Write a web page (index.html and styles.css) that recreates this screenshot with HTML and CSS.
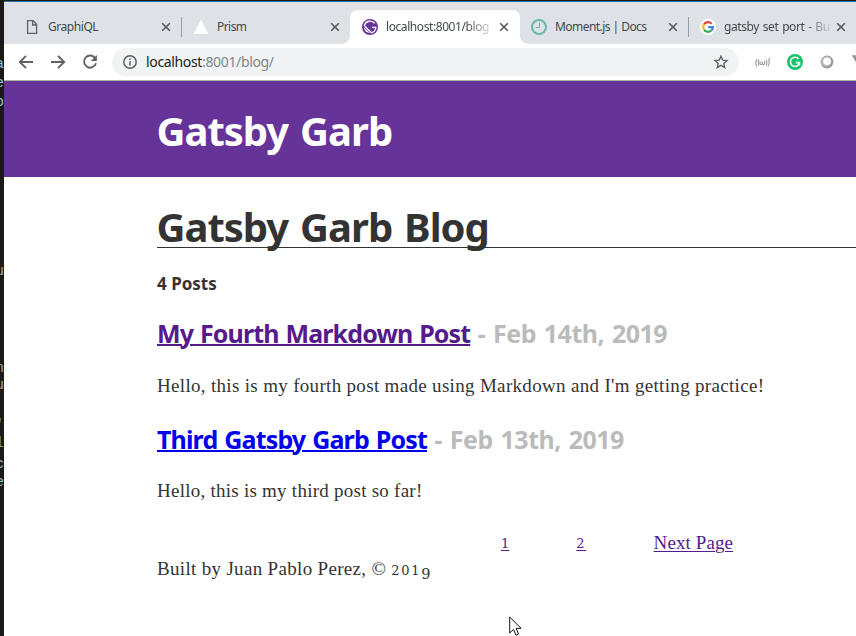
FILE: index.html
```html
<!DOCTYPE html>
<html lang="en">
<head>
<meta charset="utf-8">
<title>Gatsby Garb Blog</title>
<link rel="stylesheet" href="styles.css">
</head>
<body>
<div class="desktop">
  <aside class="editor" aria-hidden="true">
    <span class="bit" style="top:56px">a</span>
    <span class="bit" style="top:75px">e</span>
    <span class="bit" style="top:94px">o</span>
    <span class="bit tan" style="top:263px">u</span>
    <span class="bit tan" style="top:360px">n</span>
    <span class="bit tan" style="top:377px">u</span>
    <span class="bit" style="top:417px">'</span>
    <span class="bit green" style="top:435px">l</span>
    <span class="bit" style="top:456px">c</span>
    <span class="bit" style="top:474px">e</span>
  </aside>
  <div class="window">
    <nav class="tabs">
      <div class="tab divided">
        <svg class="fav" viewBox="0 0 16 16"><path d="M4.6 1.7h5.6l3.4 3.6v9H4.6z M9.7 2v4h3.8" transform="translate(-1 0)" fill="none" stroke="#5f6368" stroke-width="1.3"/></svg>
        <span class="label"><span class="t1">GraphiQL</span></span>
        <svg class="close" viewBox="0 0 10 10"><path d="M1.2 1.2l7.6 7.6M8.8 1.2L1.2 8.8"/></svg>
      </div>
      <div class="tab">
        <svg class="fav" viewBox="0 0 16 16"><path d="M8 .7L15.4 15H.6z" fill="#fff"/></svg>
        <span class="label"><span class="t2">Prism</span></span>
        <svg class="close" viewBox="0 0 10 10"><path d="M1.2 1.2l7.6 7.6M8.8 1.2L1.2 8.8"/></svg>
      </div>
      <div class="tab active">
        <svg class="fav" viewBox="0 0 16 16"><circle cx="8" cy="8" r="8" fill="#639"/><path d="M2 8.2L7.8 14A6 6 0 0 1 2 8.2z" fill="#fff"/><path d="M2.3 6.6L9.4 13.8A6 6 0 0 0 13.8 8.3H9.9M12.8 4.4A6 6 0 0 0 2.3 6.6" fill="none" stroke="#fff" stroke-width="1.3"/></svg>
        <span class="label fade"><span class="t3">localhost:8001/blog</span></span>
        <svg class="close" viewBox="0 0 10 10"><path d="M1.2 1.2l7.6 7.6M8.8 1.2L1.2 8.8"/></svg>
      </div>
      <div class="tab divided">
        <svg class="fav" viewBox="0 0 16 16"><circle cx="8" cy="8" r="7" fill="none" stroke="#66b8aa" stroke-width="2"/><path d="M8.5 3.5v5H5" fill="none" stroke="#66b8aa" stroke-width="1"/></svg>
        <span class="label"><span class="t4">Moment.js | Docs</span></span>
        <svg class="close" viewBox="0 0 10 10"><path d="M1.2 1.2l7.6 7.6M8.8 1.2L1.2 8.8"/></svg>
      </div>
      <div class="tab">
        <svg class="fav" viewBox="0 0 16 16"><circle cx="8" cy="8" r="8" fill="#fff"/><g fill="none" stroke-width="2.2"><path d="M4 5.4A4.8 4.8 0 0 1 11.6 4.7" stroke="#ea4335"/><path d="M4 5.4A4.8 4.8 0 0 0 4 10.6" stroke="#fbbc05"/><path d="M4 10.6A4.8 4.8 0 0 0 11.3 11.5" stroke="#34a853"/><path d="M11.3 11.5A4.8 4.8 0 0 0 12.9 8.1H8.2" stroke="#4285f4"/></g></svg>
        <span class="label fade"><span class="t5">gatsby set port - Bu</span></span>
        <svg class="close last" viewBox="0 0 10 10"><path d="M1.2 1.2l7.6 7.6M8.8 1.2L1.2 8.8"/></svg>
      </div>
    </nav>
    <div class="toolbar">
      <svg class="nav" viewBox="0 0 16 16"><path d="M15 8H2.2M8 1.8L1.8 8 8 14.2"/></svg>
      <svg class="nav" viewBox="0 0 16 16"><path d="M1 8h12.8M8 1.8L14.2 8 8 14.2"/></svg>
      <svg class="nav" viewBox="0 0 16 16"><path d="M13.3 4.3A6.1 6.1 0 1 0 14 9.3"/><path d="M14.9 1v6.1H8.8z" fill="#5f6368" stroke="none"/></svg>
      <div class="omnibox">
        <svg class="info" viewBox="0 0 14 14"><circle cx="7" cy="7" r="6.2" fill="none" stroke="#5f6368" stroke-width="1.5"/><path d="M7 6.2v4.2M7 3.4v1.6" stroke="#5f6368" stroke-width="1.6"/></svg>
        <span class="url"><b>localhost</b>:8001/blog/</span>
        <svg class="star" viewBox="0 0 14 14"><path d="M7 1.2l1.7 3.9 4.3.4-3.2 2.9.9 4.2L7 10.4l-3.7 2.2.9-4.2L1 5.5l4.3-.4z" fill="none" stroke="#5f6368" stroke-width="1.4"/></svg>
      </div>
      <svg class="ext" viewBox="0 0 16 16"><path d="M2 5Q-.6 9 2 12.6M4 5.5q-1.4 3 0 6M5 7.5v2.3q1 1.7 2.2 0V7.5M7.2 9.8q1.3 1.7 2.4 0V7M11 5.5q1.8 3 0 6M15.5 4.5q-2.2 0-1.5 2.4t-1.2 5.7" fill="none" stroke="#999" stroke-width="1.1"/></svg>
      <svg class="ext" viewBox="0 0 16 16"><circle cx="8" cy="8" r="8" fill="#15c26b"/><path d="M11.6 4.9A4.6 4.6 0 1 0 12.2 9.8M8.7 8.6h3.8v3" fill="none" stroke="#fff" stroke-width="1.6"/></svg>
      <svg class="ext" viewBox="0 0 16 16"><circle cx="8" cy="8" r="6.4" fill="#999"/><circle cx="7.4" cy="7.4" r="5.2" fill="#bbb"/><circle cx="8" cy="7.2" r="3.8" fill="#fff"/></svg>
      <svg class="ext" viewBox="0 0 16 16"><path d="M.7 1.3h15L8 13z" fill="#999"/></svg>
    </div>
    <header class="banner"><h1>Gatsby Garb</h1></header>
    <main class="page">
      <h1 class="blog">Gatsby Garb Blog</h1>
      <h4>4 Posts</h4>
      <article>
        <h3><a class="visited" href="#">My Fourth Markdown Post</a> <span class="date">- Feb 14th, 2019</span></h3>
        <p>Hello, this is my fourth post made using Markdown and I'm getting practice!</p>
      </article>
      <article>
        <h3><a class="fresh" href="#">Third Gatsby Garb Post</a> <span class="date">- Feb 13th, 2019</span></h3>
        <p class="short">Hello, this is my third post so far!</p>
      </article>
      <nav class="pager"><a class="num" href="#">1</a><a class="num two" href="#">2</a><a class="next" href="#">Next Page</a></nav>
      <footer>Built by Juan Pablo Perez, © <span class="num year">201<span class="nine">9</span></span></footer>
    </main>
  </div>
  <svg class="cursor" viewBox="0 0 13 20"><path d="M.7 1v16l3.8-3.6 2.5 5.8 2.6-1.1-2.5-5.7h5z" fill="#fff" stroke="#111" stroke-width="1"/></svg>
</div>
</body>
</html>
```
FILE: styles.css
```css
* { box-sizing: border-box; }
body { margin: 0; background: #fff; overflow: hidden; }
svg { display: block; flex: none; }
h1, h3, h4, p { margin: 0; }
.desktop { position: relative; display: flex; width: 856px; height: 636px; overflow: hidden; background: #1b1a17; }
.editor { position: relative; width: 4px; flex: none; overflow: hidden; font: 14px/17px "Liberation Mono", monospace; color: #8fc3d8; }
.bit { position: absolute; right: 0; }
.tan { color: #b9a88c; }
.green { color: #89a77c; }
.window { flex: 1; min-width: 0; margin-top: 1px; border-top: 1px solid #2673ad; background: #fff; overflow: hidden; }

.tabs { display: flex; height: 42px; padding: 8px 0 0 8px; background: #dee1e6; font: 12px/16px "Noto Sans", "Open Sans", sans-serif; color: #45494d; }
.tab { position: relative; display: flex; align-items: center; flex: none; width: 169px; padding: 0 10px 0 12px; }
.fav { width: 16px; height: 16px; margin-right: 8px; }
.label { width: 106px; overflow: hidden; white-space: nowrap; }
.fade { -webkit-mask-image: linear-gradient(90deg, #000 80px, transparent 110px); mask-image: linear-gradient(90deg, #000 80px, transparent 110px); }
.t1 { letter-spacing: -.45px; }
.t2 { letter-spacing: -.55px; }
.t3 { letter-spacing: -.42px; }
.t4 { letter-spacing: -.55px; }
.t5 { letter-spacing: -.4px; word-spacing: 1px; }
.close { width: 10px; height: 10px; margin-left: 7px; fill: none; stroke: #55595d; stroke-width: 1.6; }
.last { margin-left: 6px; }
.divided::after { content: ""; position: absolute; right: -1px; top: 7px; width: 1px; height: 20px; background: #9a9da2; }
.active { border-radius: 8px 8px 0 0; background: #fff; width: 170px; margin: 0 -1px 0 0; }
.active::before, .active::after { content: ""; position: absolute; bottom: 0; width: 8px; height: 8px; }
.active::before { left: -8px; background: radial-gradient(circle at 0 0, transparent 7.5px, #fff 8px); }
.active::after { right: -8px; background: radial-gradient(circle at 8px 0, transparent 7.5px, #fff 8px); }

.toolbar { display: flex; align-items: center; height: 37px; padding-left: 14px; border-bottom: 1px solid #aeb3a4; background: #fff; }
.nav { width: 16px; height: 16px; margin-right: 16px; fill: none; stroke: #5f6368; stroke-width: 1.9; }
.omnibox { display: flex; align-items: center; flex: none; width: 627px; height: 28px; margin: 0 16px 0 -2px; padding: 0 11px; border-radius: 14px; background: #f1f3f4; font: 14px/20px "Noto Sans", "Open Sans", sans-serif; color: #80868b; }
.info { width: 14px; height: 14px; margin-right: 9px; }
.url { flex: 1; letter-spacing: -.35px; }
.url b { font-weight: 400; color: #202124; }
.star { width: 14px; height: 14px; overflow: visible; }
.ext { width: 16px; height: 16px; margin-right: 16px; }

.banner { height: 96px; padding: 22px 0 0 153px; background: #639; color: #fff; }
h1 { font: 700 40px/56px "Noto Sans", "Open Sans", sans-serif; letter-spacing: -1px; word-spacing: 2.5px; text-indent: -.5px; white-space: nowrap; }
.page { padding-left: 153px; color: #333; font: 19px/28px "Liberation Serif", serif; white-space: nowrap; }
.blog { height: 71px; padding-top: 22px; border-bottom: 1px solid #333; }
h4 { height: 28px; margin-top: 22px; font: 700 17px/28px "Noto Sans", "Open Sans", sans-serif; }
h3 { height: 36px; margin-top: 17px; font: 700 25px/36px "Noto Sans", "Open Sans", sans-serif; }
h3 a { letter-spacing: -.88px; word-spacing: 1.3px; text-decoration-thickness: 2px; }
h3 .fresh { letter-spacing: -.85px; }
article p { height: 28px; margin-top: 21px; letter-spacing: .32px; }
article p.short { letter-spacing: .25px; margin-top: 20px; }
article + article h3 { margin-top: 21px; }
.visited { color: #551a8b; }
.fresh { color: #00e; }
.date { margin-left: 1px; color: #bbb; letter-spacing: -.5px; word-spacing: 1.8px; }
.pager { display: flex; height: 28px; margin: 24px 0 0 344px; }
.pager a { margin-right: 67px; color: #551a8b; text-decoration-thickness: 1px; text-underline-offset: 2px; }
.pager .num { line-height: 30px; }
.pager .two { margin-right: 67.5px; letter-spacing: 1.5px; }
.pager .next { margin-right: 0; letter-spacing: .1px; }
.num { font-family: "DejaVu Serif", serif; font-size: 13px; }
.year { letter-spacing: 1.7px; }
.nine { display: inline-block; font-size: 14.5px; line-height: 1; letter-spacing: 0; transform: translateY(4px); }
footer { margin-top: -2px; letter-spacing: .32px; }
.cursor { position: absolute; left: 509px; top: 616px; width: 13px; height: 20px; }
```
